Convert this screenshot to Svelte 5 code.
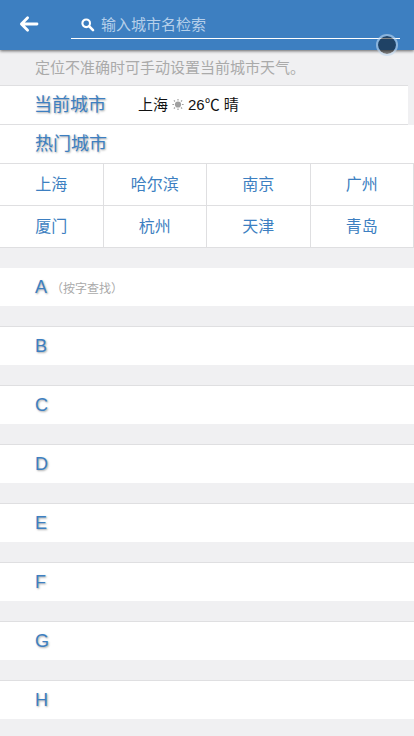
<script>
  const hotCities = ['上海', '哈尔滨', '南京', '广州', '厦门', '杭州', '天津', '青岛'];
  const letters = ['A', 'B', 'C', 'D', 'E', 'F', 'G', 'H'];
  let query = $state('');
</script>

<div class="page">
  <header>
    <button class="back" type="button" aria-label="返回">
      <svg width="20" height="18" viewBox="0 0 20 18" fill="none" stroke="#fff" stroke-width="2.8" stroke-linecap="round" stroke-linejoin="round">
        <path d="M8.6 2.8 2.4 9 8.6 15.2M2.8 9H18" />
      </svg>
    </button>
    <label class="search">
      <svg width="14" height="14" viewBox="0 0 14 14" fill="none" stroke="#fff">
        <circle cx="5.2" cy="5.3" r="3.8" stroke-width="2.1" />
        <path d="M8.3 8.4 12 12.1" stroke-width="2.6" stroke-linecap="round" />
      </svg>
      <input type="text" placeholder="输入城市名检索" aria-label="输入城市名检索" bind:value={query} />
    </label>
    <span class="touch"></span>
  </header>

  <main>
    <p class="notice">定位不准确时可手动设置当前城市天气。</p>

    <section class="current">
      <h2>当前城市</h2>
      <p>
        <span>上海</span>
        <svg width="12" height="12" viewBox="0 0 12 12" stroke="#a0a0a0" stroke-width="1.2">
          <circle cx="6" cy="5.5" r="3.1" fill="#a0a0a0" stroke="none" />
          <path d="M6 0V1.6M6 9.4V11M.4 5.5H2M10 5.5H11.6M1.9 1.4 3 2.5M9 8.5 10.1 9.6M1.9 9.6 3 8.5M9 2.5 10.1 1.4" />
        </svg>
        <span>26℃ 晴</span>
      </p>
    </section>

    <section class="hot">
      <h2>热门城市</h2>
      <div class="grid">
        {#each hotCities as city}
          <button type="button">{city}</button>
        {/each}
      </div>
    </section>

    {#each letters as letter, i}
      <section class="letter">
        <h2>{letter}</h2>
        {#if i === 0}<small>（按字查找）</small>{/if}
      </section>
    {/each}
  </main>
</div>

<style>
  :global(body) {
    background: #f0f0f2;
  }

  .page {
    font-family: 'Liberation Sans', 'Noto Sans CJK SC', sans-serif;
    color: #111;
  }

  header {
    position: relative;
    z-index: 1;
    display: flex;
    height: 50px;
    padding-right: 14px;
    box-sizing: border-box;
    background: #3d7fc1;
    box-shadow: 0 1px 3px rgba(0, 0, 0, 0.6);
  }

  button {
    margin: 0;
    padding: 0;
    border: 0;
    background: none;
    font: inherit;
    color: inherit;
  }

  .back {
    display: flex;
    align-items: center;
    width: 71px;
    padding-left: 19px;
    padding-bottom: 2px;
  }

  .search {
    display: flex;
    flex: 1;
    align-items: center;
    gap: 6px;
    height: 28px;
    margin-top: 10px;
    padding-left: 10px;
    border-bottom: 1px solid #fff;
  }

  .search svg {
    padding-top: 2px;
  }

  .search input {
    flex: 1;
    min-width: 0;
    padding: 2px 0 0;
    border: 0;
    outline: 0;
    background: none;
    font: inherit;
    font-size: 15px;
    line-height: 22px;
    color: #fff;
  }

  .search input::placeholder {
    color: #b5cfea;
    opacity: 1;
  }

  .touch {
    position: absolute;
    right: 16px;
    bottom: -6px;
    width: 18px;
    height: 18px;
    border: 2px solid rgba(190, 215, 240, 0.6);
    border-radius: 50%;
    background: rgba(0, 0, 0, 0.48);
    background-clip: padding-box;
  }

  h2,
  p {
    margin: 0;
    font-weight: 400;
  }

  h2 {
    font-size: 18px;
    line-height: 38px;
    color: #3d7fc1;
    text-shadow: 1px 1px 2px rgba(0, 0, 0, 0.35);
  }

  .notice {
    padding-left: 35px;
    font-size: 15px;
    line-height: 35px;
    color: #aaa;
  }

  .current {
    display: flex;
    gap: 32px;
    margin-right: 6px;
    padding-left: 34px;
    border: solid #dfdfe1;
    border-width: 1px 0;
    background: #fff;
  }

  .current p {
    display: flex;
    align-items: center;
    gap: 4px;
    font-size: 15px;
    line-height: 38px;
  }

  .hot {
    background: #fff;
  }

  .hot h2 {
    padding-left: 35px;
  }

  .grid {
    display: grid;
    grid-template-columns: repeat(4, 1fr);
    border-top: 1px solid #dfdfe1;
  }

  .grid button {
    height: 42px;
    padding-bottom: 4px;
    border: solid #dfdfe1;
    border-width: 0 1px 1px 0;
    font-size: 16px;
    color: #3d7fc1;
  }

  .letter {
    display: flex;
    align-items: center;
    gap: 4px;
    margin-top: 20px;
    padding-left: 35px;
    border-top: 1px solid #dfdfe1;
    background: #fff;
  }

  .hot + .letter {
    border-top: 0;
  }

  .letter small {
    padding-top: 4px;
    font-size: 12px;
    line-height: 18px;
    color: #aaa;
  }
</style>
